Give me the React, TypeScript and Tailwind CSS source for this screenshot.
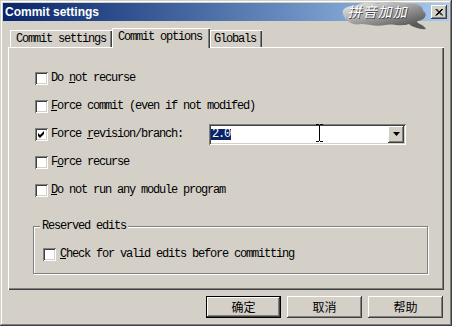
import React from 'react';

const MONO = "font-['Liberation_Mono',monospace] text-[12px] tracking-[-1.2px] text-black";
const RAISED = 'shadow-[inset_-1px_-1px_#404040,inset_1px_1px_#ffffff,inset_-2px_-2px_#808080]';
const SUNKEN = 'shadow-[inset_1px_1px_#808080,inset_-1px_-1px_#ffffff,inset_2px_2px_#404040,inset_-2px_-2px_#d4d0c8]';

function CheckBox({ checked = false }: { checked?: boolean }) {
  return (
    <span className={`flex h-[13px] w-[13px] shrink-0 items-center justify-center bg-white ${SUNKEN}`}>
      {checked && (
        <svg width="9" height="9" viewBox="0 0 9 9">
          <polygon points="1,3 3,5 7,1 7,4 3,8 1,6" fill="#000" />
        </svg>
      )}
    </span>
  );
}

function Row({ checked, children }: { checked?: boolean; children: React.ReactNode }) {
  return (
    <div className="flex h-[28px] items-center gap-[3px]">
      <CheckBox checked={checked} />
      {children}
    </div>
  );
}

function Combo() {
  return (
    <div className={`relative flex h-[21px] w-[197px] items-center bg-white pl-[2px] pr-[2px] ${SUNKEN}`}>
      <span className="bg-[#0a246a] px-[1px] leading-[11px] text-white">2.0</span>
      <svg className="absolute left-[107px] top-[0px]" width="7" height="18" viewBox="0 0 7 18">
        <path d="M0 0.5h3M4 0.5h3M3.5 1v16M0 17.5h3M4 17.5h3" stroke="#000" strokeWidth="1" fill="none" />
      </svg>
      <span className={`ml-auto flex h-[17px] w-[16px] items-center justify-center bg-[#d4d0c8] ${RAISED}`}>
        <svg width="7" height="4" viewBox="0 0 7 4">
          <polygon points="0,0 7,0 3.5,4" fill="#000" />
        </svg>
      </span>
    </div>
  );
}

function Cloud() {
  return (
    <div className="absolute left-[340px] top-0 z-20 h-[32px] w-[90px]">
      <svg width="90" height="32" viewBox="0 0 90 32">
        <defs>
          <linearGradient id="cl" x1="0" y1="0" x2="1" y2="1">
            <stop offset="0" stopColor="#f2f2f2" />
            <stop offset="0.45" stopColor="#a8a8a8" />
            <stop offset="1" stopColor="#4a4a4a" />
          </linearGradient>
        </defs>
        <path d="M70 20 C78 22 84 26 86 29 C80 30 74 27 70 25 Z" fill="#5a5a5a" />
        <path
          d="M3 14 C1 9 8 5 16 6 C21 2 31 2 38 4 C46 1 58 1 65 4 C73 2 84 5 83 11 C89 14 84 21 77 21 C79 25 73 27 69 24 C61 27 52 23 45 25 C37 27 27 24 21 24 C13 26 5 21 3 14 Z"
          fill="url(#cl)"
        />
      </svg>
      <span className="absolute left-[9px] top-[3px] -skew-x-12 font-['Noto_Sans_CJK_SC',sans-serif] text-[14px] leading-[16px] tracking-[1px] text-white [text-shadow:1px_1px_0_#444]">
        拼音加加
      </span>
    </div>
  );
}

function Tab({ label, active, w, pl }: { label: string; active?: boolean; w: string; pl: string }) {
  return (
    <div
      className={`flex shrink-0 items-center bg-[#d4d0c8] shadow-[inset_1px_1px_#ffffff,inset_-1px_0_#404040,inset_-2px_0_#808080] ${w} ${pl} ${
        active ? 'relative z-10 -mb-[1px] h-[20px] pb-[2px]' : 'h-[17px]'
      }`}
    >
      {label}
    </div>
  );
}

function Button({ label, primary }: { label: string; primary?: boolean }) {
  return (
    <div
      className={`flex h-[22px] w-[75px] items-center justify-center font-['Noto_Sans_CJK_SC',sans-serif] text-[12px] tracking-normal text-black ${
        primary ? 'border border-black' : ''
      } ${RAISED}`}
    >
      {label}
    </div>
  );
}

export default function App() {
  return (
    <div
      className={`relative flex h-[326px] w-[452px] flex-col bg-[#d4d0c8] p-[3px] shadow-[inset_-1px_-1px_#404040,inset_1px_1px_#d4d0c8,inset_-2px_-2px_#808080,inset_2px_2px_#ffffff] ${MONO}`}
    >
      <div className="flex h-[18px] items-center bg-gradient-to-r from-[#0a246a] to-[#a6caf0] pl-[2px] pr-[2px]">
        <span className="font-['Liberation_Sans',sans-serif] text-[12px] font-bold tracking-normal text-white">
          Commit settings
        </span>
        <span className={`ml-auto flex h-[14px] w-[16px] items-center justify-center bg-[#d4d0c8] ${RAISED}`}>
          <svg width="8" height="7" viewBox="0 0 8 7">
            <path d="M0.5 0 L7 6.5 M1.5 0 L8 6.5 M7 0 L0.5 6.5 M8 0 L1.5 6.5" stroke="#000" strokeWidth="1" />
          </svg>
        </span>
      </div>
      <Cloud />

      <div className="flex h-[26px] items-end px-[7px]">
        <Tab label="Commit settings" w="w-[102px]" pl="pl-[6px]" />
        <Tab label="Commit options" active w="w-[98px]" pl="pl-[6px]" />
        <Tab label="Globals" w="w-[52px]" pl="pl-[4px]" />
      </div>

      <div className="mx-[5px] h-[243px] pl-[27px] pt-[17px] shadow-[inset_1px_1px_#ffffff,inset_-1px_-1px_#404040,inset_-2px_-2px_#808080]">
        <Row>
          <span>
            Do <u>n</u>ot recurse
          </span>
        </Row>
        <Row>
          <span>
            <u>F</u>orce commit (even if not modifed)
          </span>
        </Row>
        <Row checked>
          <span className="w-[155px]">
            Force <u>r</u>evision/branch:
          </span>
          <Combo />
        </Row>
        <Row>
          <span>
            F<u>o</u>rce recurse
          </span>
        </Row>
        <Row>
          <span>
            <u>D</u>o not run any module program
          </span>
        </Row>

        <div className="relative -ml-[2px] mt-[22px] h-[48px] w-[395px] border border-[#808080] pl-[9px] pt-[18px] shadow-[1px_1px_0_#ffffff,inset_1px_1px_0_#ffffff]">
          <span className="absolute -top-[8px] left-[6px] bg-[#d4d0c8] px-[2px] leading-[14px]">Reserved edits</span>
          <div className="flex items-center gap-[4px]">
            <CheckBox />
            <span>
              <u>C</u>heck for valid edits before committing
            </span>
          </div>
        </div>
      </div>

      <div className="mt-[6px] flex h-[22px] justify-end gap-[6px] pr-[6px]">
        <Button label="确定" primary />
        <Button label="取消" />
        <Button label="帮助" />
      </div>
    </div>
  );
}
